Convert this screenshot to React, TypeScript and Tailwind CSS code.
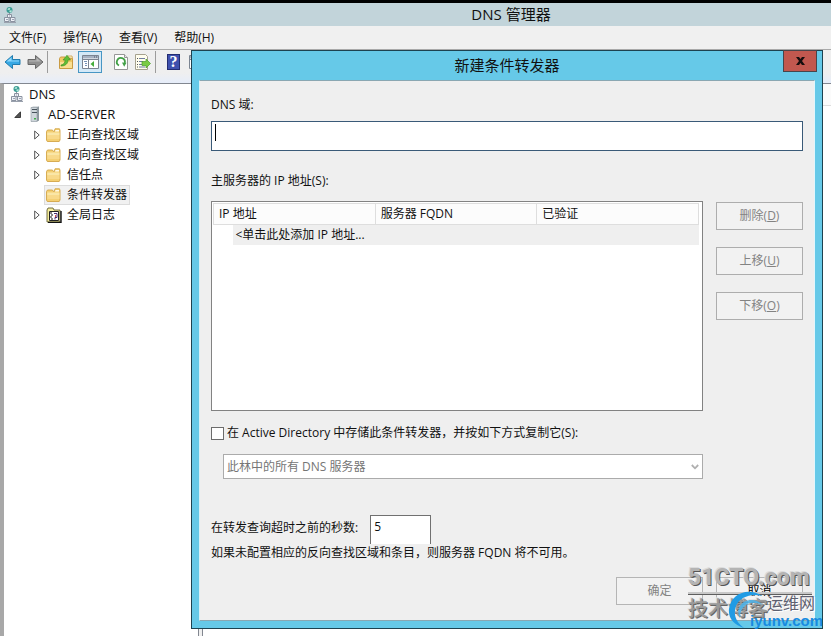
import React, { useState } from 'react';

type IconProps = { className?: string };

const DnsIcon: React.FC<IconProps> = ({ className = 'h-4 w-3' }) => (
  <svg viewBox="0 0 12 16" className={className} aria-hidden="true">
    <circle cx="5.500" cy="3" r="3" fill="#3a9c93" />
    <path d="M3.200 2.200l2-1.400 1.200 1-1.200 1.400zM5 4l2.300-1 .6 1.400-1.600 1.200z" fill="#b6e8dd" />
    <path d="M5.500 6v1" stroke="#8c94a3" />
    <path d="M3.500 7.500h4v3h-4zM.5 10.500h4.500v4H.5zM6.500 10.500h4.500v4H6.500z" fill="#eef0f6" stroke="#8a92a0" />
    <path d="M2 12.500h2M8 12.500h2M5 9h1" stroke="#9aa3b5" />
    <path d="M0 15.500h12" stroke="#9aa1ad" />
  </svg>
);

const ServerIcon = () => (
  <svg viewBox="0 0 10 16" className="h-4 w-[10px]" aria-hidden="true">
    <path d="M1 1.500L3 .5h6v14l-2 1H1z" fill="#b9c1c8" />
    <path d="M7 1.500l2-1v14l-2 1z" fill="#8c979e" />
    <path d="M1 1.500h6v14H1z" fill="#cfd6db" stroke="#929ca4" strokeWidth=".6" />
    <path d="M2 3.500h5M2 6.500h5" stroke="#47525b" />
    <path d="M4 12h2v1.500H4z" fill="#3fae4b" />
  </svg>
);

const FolderIcon = () => (
  <svg viewBox="0 0 15 14" className="h-[14px] w-[15px]" aria-hidden="true">
    <path d="M.5 3.500L1.500 2h5l1 1.500h.8L9 .8h4.500l.5 1.500V12l-.8 1.500H1.300L.5 12z" fill="#f4cf72" stroke="#d2a548" strokeWidth=".9" />
    <path d="M9.500 2h3.500v1.500H9z" fill="#fffbe8" />
    <path d="M1.200 4.500h12.300v3H1.200z" fill="#fae6a6" />
    <path d="M1.200 7.500h12.300V11H1.200z" fill="#f8d98a" />
  </svg>
);

const LogIcon = () => (
  <svg viewBox="0 0 16 16" className="h-4 w-4" aria-hidden="true">
    <path d="M1 3l1-2h5l1 2h6v12H1z" fill="#f6ee9d" stroke="#504c20" strokeWidth=".8" />
    <path d="M15 4v11.500H2" fill="none" stroke="#111" strokeWidth="1.400" />
    <path d="M3.500 4.500h9v9h-9z" fill="#fff" stroke="#222" />
    <path d="M4 6h2M5 8h2M4 10h2M5 12h2" stroke="#111" />
    <path d="M8 6.500h3v4H9v2" fill="none" stroke="#4a3170" />
    <path d="M9 8h1v2H9z" fill="#d94b45" />
  </svg>
);

const ArrowIcon: React.FC<{ forward?: boolean }> = ({ forward }) => (
  <svg viewBox="0 0 17 16" className={forward ? 'h-4 w-[17px] rotate-180' : 'h-4 w-[17px]'} aria-hidden="true">
    <path d="M1 8l7.500-6.500v4H16v5H8.500v4z" fill={forward ? '#919191' : '#36a8e4'} stroke={forward ? '#686868' : '#227cae'} strokeLinejoin="round" />
    <path d={forward ? 'M3 8.500l4.500 3.700V9.500H15V8.500z' : 'M2.500 7.500l5-4.200v3.200H15v1z'} fill={forward ? '#b8b8b8' : '#8fd8fb'} />
  </svg>
);

const FolderUpIcon = () => (
  <svg viewBox="0 0 16 16" className="h-4 w-4" aria-hidden="true">
    <path d="M1.500 4.500l1-1.500H7l1 1.500h6.500v10h-13z" fill="#f2c864" stroke="#c99b43" />
    <path d="M9 3.500L10 2h4l.5 2.500z" fill="#fff5cf" stroke="#c99b43" strokeWidth=".8" />
    <path d="M2 8h12v6H2z" fill="#fadf91" />
    <path d="M3 11c3-.5 4-2.500 4-5H5l4-4.800 3.500 4.800H10c0 4-3 6-7 6z" fill="#60bd35" stroke="#3f8f24" strokeWidth=".6" />
  </svg>
);

const ConsoleTreeIcon = () => (
  <svg viewBox="0 0 17 14" className="h-[14px] w-[17px]" aria-hidden="true">
    <path d="M.5.5h16v13H.5z" fill="#fff" stroke="#7b8491" />
    <path d="M1 1h15v2.500H1z" fill="#a6b2c2" />
    <path d="M12 2h1M14 2h1" stroke="#4c596b" />
    <path d="M1 4.500h15M6.500 5v8" stroke="#7b8491" />
    <path d="M2 6.500h3M3 8.500h2M3 10.500h2" stroke="#7591b5" />
    <path d="M12 6v6L8.500 9z" fill="#45ad3b" />
  </svg>
);

const RefreshIcon = () => (
  <svg viewBox="0 0 14 16" className="h-4 w-[14px]" aria-hidden="true">
    <path d="M.5.5h10l3 3v12H.5z" fill="#fff" stroke="#969696" />
    <path d="M10.500.5v3h3" fill="#e6e6e6" stroke="#969696" />
    <path d="M5 11.500A4 4 0 1 1 10.700 9" fill="none" stroke="#43a047" strokeWidth="1.800" />
    <path d="M8 8.500l4.500.2-2.300 4z" fill="#43a047" />
  </svg>
);

const ExportIcon = () => (
  <svg viewBox="0 0 16 16" className="h-4 w-4" aria-hidden="true">
    <path d="M.5.5h10l2 2v13H.5z" fill="#fffdee" stroke="#a5a18e" />
    <path d="M2 4.500h1M2 7.500h1M2 10.500h1M2 13h1" stroke="#555" />
    <path d="M4 4.500h6M4 7.500h4M4 10.500h4M4 13h6" stroke="#6e7da0" />
    <path d="M7 7.500h4V5l4.500 4.500L11 14v-2.500H7z" fill="#7acb43" stroke="#4c9e2a" strokeWidth=".7" />
  </svg>
);

const ExpandIcon = () => (
  <svg viewBox="0 0 6 10" className="h-[10px] w-[6px]" aria-hidden="true">
    <path d="M.7 1v8L5.200 5z" fill="#fff" stroke="#555" />
  </svg>
);

const zones = [
  { label: '正向查找区域', expandable: true },
  { label: '反向查找区域', expandable: true },
  { label: '信任点', expandable: true },
  { label: '条件转发器', expandable: false, selected: true },
  { label: '全局日志', expandable: true, log: true },
];

const menus = ['文件(F)', '操作(A)', '查看(V)', '帮助(H)'];

const sideButtons = [
  { text: '删除', hotkey: 'D' },
  { text: '上移', hotkey: 'U' },
  { text: '下移', hotkey: 'O' },
];

const Toolbar = () => (
  <div className="flex h-[34px] items-start border-t border-[#a9a9a9] bg-linear-to-b from-[#efefef] from-70% to-[#e6edfa] pl-1 pt-px">
    <div className="flex h-[22px] items-center">
      <button aria-label="后退"><ArrowIcon /></button>
      <button aria-label="前进" className="ml-[6px]"><ArrowIcon forward /></button>
      <span className="ml-[3px] h-[22px] w-px bg-[#9c9c9c]" />
      <button aria-label="向上" className="ml-[10px]"><FolderUpIcon /></button>
      <button aria-label="控制台树" className="ml-1 flex h-[22px] w-6 items-center justify-center border border-[#4796c4] bg-[#d4e9f7]">
        <ConsoleTreeIcon />
      </button>
      <button aria-label="刷新" className="ml-3"><RefreshIcon /></button>
      <button aria-label="导出" className="ml-[7px]"><ExportIcon /></button>
      <span className="ml-1 h-[22px] w-px bg-[#9c9c9c]" />
      <button aria-label="帮助" className="ml-[11px] flex h-4 w-[13px] items-center justify-center border border-[#232d72] bg-[#3f51ae] font-['Liberation_Serif',serif] text-base leading-4 font-bold text-white">
        ?
      </button>
      <button aria-label="属性" className="ml-[9px]"><ConsoleTreeIcon /></button>
    </div>
  </div>
);

const Tree = () => (
  <nav className="w-[195px] shrink-0 border-r border-[#828790] bg-white text-xs leading-5">
    <div className="flex h-5 items-center gap-[6px] pl-[7px]">
      <DnsIcon />
      <span className="text-[13px]">DNS</span>
    </div>
    <div className="flex h-5 items-center pl-[10px]">
      <svg viewBox="0 0 7 7" className="h-[7px] w-[7px]" aria-hidden="true">
        <path d="M6.500.8v5.700H.8z" fill="#555" stroke="#222" strokeWidth=".8" />
      </svg>
      <span className="ml-[9px]"><ServerIcon /></span>
      <span className="ml-2 text-[13px]">AD-SERVER</span>
    </div>
    <div className="pt-px">
      {zones.map((zone) => (
        <div key={zone.label} className="flex h-5 items-center pl-[30px]">
          <span className="w-[10px]">{zone.expandable && <ExpandIcon />}</span>
          <span
            className={
              zone.selected
                ? 'flex h-5 items-center gap-[5px] border border-[#dcdcdc] bg-[#f1f1f1] pr-[2px] pl-px'
                : 'flex h-5 items-center gap-[5px] border border-transparent pl-px'
            }
          >
            <span className="flex w-4 justify-start">{zone.log ? <LogIcon /> : <FolderIcon />}</span>
            {zone.label}
          </span>
        </div>
      ))}
    </div>
  </nav>
);

const Watermark = () => (
  <div className="pointer-events-none absolute right-[6px] bottom-0 h-[72px] w-[138px] whitespace-nowrap">
    <div className="absolute top-0 left-px text-[23px] leading-[28px] font-extrabold text-[#b4b4b4] font-['Roboto',sans-serif] [text-shadow:1px_1px_0_#555,-1px_-1px_0_#dcdcdc]">
      51CTO.com
    </div>
    <div className="absolute top-[28px] left-px h-[3px] w-[124px] border-b border-[#5e5e5e] bg-[#c8c8c8]" />
    <div className="absolute top-[32px] left-px text-[20px] leading-6 font-medium text-[#9a9a9a] font-['Noto_Sans_CJK_SC',sans-serif] [text-shadow:1px_1px_0_#666,-1px_-1px_0_#e2e2e2]">
      技术博客
    </div>
    <svg viewBox="0 0 42 38" className="absolute top-[27px] left-10 h-[38px] w-[42px]" aria-hidden="true">
      <path d="M35 5C22-4 4 2 2 18c-1 9 5 16 15 19C9 31 6 24 9 15 13 6 24 2 35 5z" fill="#209be4" />
      <path d="M13 27C8 18 15 9 24 9c5 0 9 2 12 5-7-3-13-3-17 0s-6 7-6 13z" fill="#4bb5ed" fillOpacity=".85" />
    </svg>
    <div className="absolute top-[28px] left-20 text-base leading-5 text-[#5d6070] font-['Noto_Sans_CJK_SC',sans-serif] [text-shadow:1px_1px_0_#fff]">
      运维网
    </div>
    <div className="absolute top-[47px] left-[63px] text-[15px] leading-5 font-bold text-[#178be0] font-['Liberation_Sans',sans-serif]">
      iyunv.com
    </div>
  </div>
);

const ForwarderDialog = () => {
  const [domain, setDomain] = useState('');
  const [timeout, setTimeoutValue] = useState('5');
  const [stored, setStored] = useState(false);

  return (
    <section
      role="dialog"
      aria-labelledby="dialog-title"
      className="absolute top-[50px] right-2 left-[191px] border border-[#1d4250] bg-[#66c9e8] px-[7px] pb-[7px]"
    >
      <header className="relative flex h-[29px] items-start justify-center">
        <h2 id="dialog-title" className="text-[15px] leading-[28px]">新建条件转发器</h2>
        <button
          aria-label="关闭"
          className="absolute -top-px -right-[2px] flex h-[22px] w-[34px] items-center justify-center border border-[#48454b] bg-[#c1584f]"
        >
          <svg viewBox="0 0 9 8" className="h-2 w-[9px]" aria-hidden="true">
            <path d="M0 0h3l1.500 2L6 0h3L6 4l3 4H6L4.500 6 3 8H0l3-4z" fill="#160d0d" />
          </svg>
        </button>
      </header>

      <div className="border border-t-[#8aa7b2] border-r-[#e2f6fc] border-b-[#8aa7b2] border-l-[#d9f1f8] bg-[#efefef] pt-[14px] pr-[11px] pb-[15px] pl-[11px] text-xs">
        <label htmlFor="domain" className="block leading-5">DNS 域:</label>
        <div className="relative mt-[6px]">
          <input
            id="domain"
            value={domain}
            onChange={(e) => setDomain(e.target.value)}
            className="block h-[30px] w-full border border-[#3a5a78] bg-white px-1 caret-transparent outline-none"
          />
          <span className="pointer-events-none absolute top-[3px] left-1 h-[17px] w-px bg-black" />
        </div>

        <p id="servers-label" className="mt-5 leading-5">主服务器的 IP 地址(S):</p>
        <div className="mt-[10px] flex gap-[13px]">
          <div className="h-[210px] flex-1 border border-[#828282] bg-white py-px pr-[3px] pl-px">
            <table aria-labelledby="servers-label" className="w-full table-fixed border-collapse text-left">
              <thead>
                <tr className="h-[21px]">
                  {['IP 地址', '服务器 FQDN', '已验证'].map((col) => (
                    <th key={col} className="border border-[#dedede] bg-[#fcfcfc] p-0 pb-px pl-[5px] leading-[18px] font-normal">
                      {col}
                    </th>
                  ))}
                </tr>
              </thead>
              <tbody>
                <tr>
                  <td colSpan={3} className="p-0 pl-[19px]">
                    <div className="bg-[#efefef] pl-[3px] leading-5">&lt;单击此处添加 IP 地址...</div>
                  </td>
                </tr>
              </tbody>
            </table>
          </div>
          <div className="flex w-[87px] flex-col gap-[17px] pt-px">
            {sideButtons.map(({ text, hotkey }) => (
              <button key={hotkey} disabled className="h-7 border border-[#adadad] bg-[#f2f2f2] text-[#838383]">
                {text}(<u>{hotkey}</u>)
              </button>
            ))}
          </div>
        </div>

        <label className="mt-[12px] flex items-center gap-[3px] leading-5">
          <input
            type="checkbox"
            checked={stored}
            onChange={() => setStored(!stored)}
            className="h-[13px] w-[13px] appearance-none border border-[#6c6c6c] bg-white checked:bg-[#6c6c6c]"
          />
          在 Active Directory 中存储此条件转发器，并按如下方式复制它(S):
        </label>

        <div className="relative mt-[11px] mr-[100px] ml-3">
          <select
            aria-label="复制方式"
            disabled
            className="block h-[25px] w-full appearance-none border border-[#ababab] bg-white px-[3px] text-[#757575] opacity-100"
          >
            <option>此林中的所有 DNS 服务器</option>
          </select>
          <svg viewBox="0 0 8 6" className="pointer-events-none absolute top-[10px] right-1 h-[6px] w-2" aria-hidden="true">
            <path d="M.8 1L4 4.300 7.200 1" fill="none" stroke="#b0b0b0" strokeWidth="1.800" />
          </svg>
        </div>

        <div className="mt-9 flex items-start gap-3">
          <label htmlFor="timeout" className="pt-[3px] leading-5">在转发查询超时之前的秒数:</label>
          <input
            id="timeout"
            value={timeout}
            onChange={(e) => setTimeoutValue(e.target.value)}
            className="h-[29px] w-[61px] border border-b-0 border-[#707070] bg-white px-[3px] pb-[7px] text-xs outline-none"
          />
        </div>
        <p className="leading-[18px]">如果未配置相应的反向查找区域和条目，则服务器 FQDN 将不可用。</p>

        <div className="mt-[15px] flex justify-end gap-[13px]">
          <button disabled className="h-7 w-[87px] border border-[#b5b5b5] bg-[#f2f2f2] text-[#838383]">确定</button>
          <button className="h-7 w-[87px] border border-[#b5b5b5] bg-[#f2f2f2] text-black">取消</button>
        </div>
      </div>
    </section>
  );
};

export default function App() {
  return (
    <main className="relative flex min-h-screen flex-col overflow-hidden border-t-[3px] border-black bg-[#f0f0f0] text-xs text-[#111] font-['Open_Sans','Noto_Sans_CJK_SC',sans-serif]">
      <div className="absolute inset-x-0 top-0 -mt-[3px] h-full">
        <ForwarderDialog />
      </div>
      <header className="flex h-[23px] items-center bg-[#c2d4da] pl-1">
        <DnsIcon />
        <h1 className="flex-1 pl-[175px] text-center text-[15px] leading-[23px]">DNS 管理器</h1>
      </header>
      <nav className="flex h-[23px] items-center gap-[17px] pl-[9px]">
        {menus.map((menu) => (
          <button key={menu}>{menu}</button>
        ))}
      </nav>
      <Toolbar />
      <div className="flex flex-1 border-t border-l-4 border-t-[#828790] border-l-[#a8a8a8]">
        <Tree />
        <div className="ml-[3px] flex-1 border-l border-[#828790] bg-white">
          <div className="h-[22px] border-b border-[#dedede] bg-[#fbfbfb]" />
        </div>
      </div>
      <Watermark />
    </main>
  );
}
